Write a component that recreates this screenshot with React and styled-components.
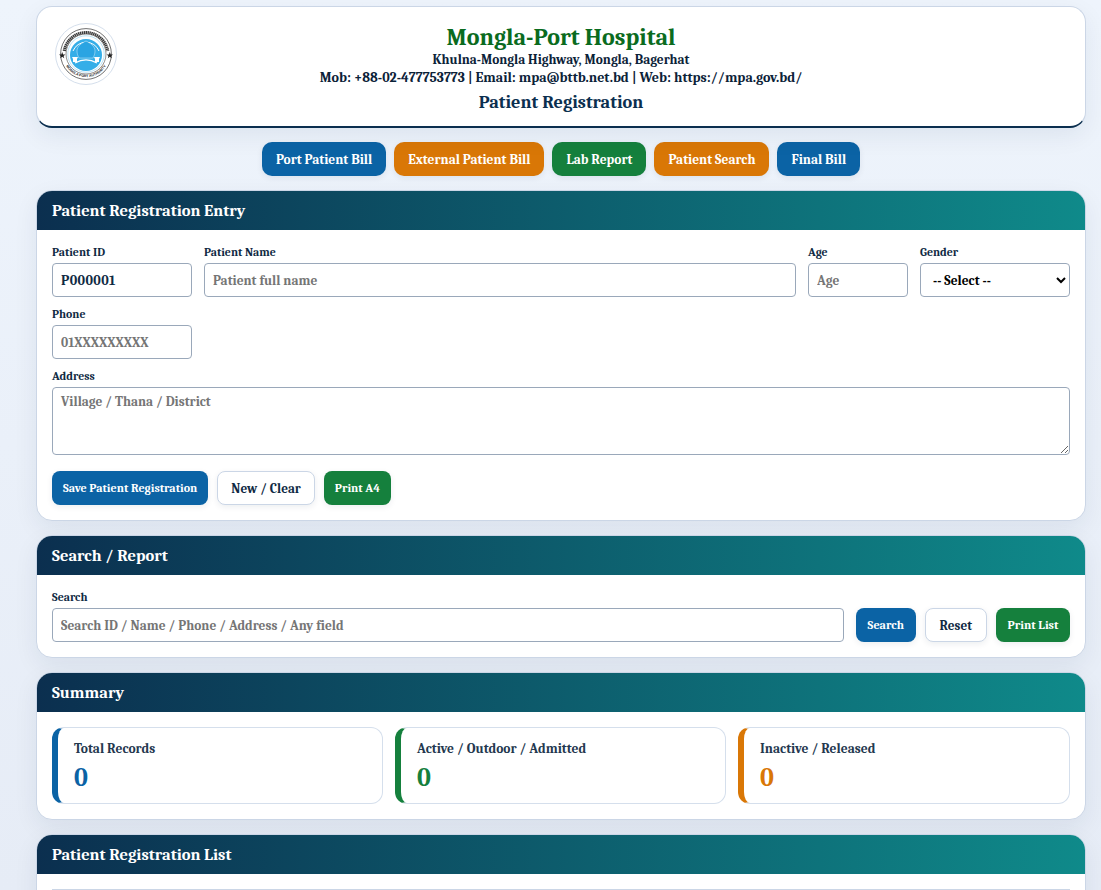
import React from 'react';
import styled, { createGlobalStyle } from 'styled-components';

const serif = `Cambria, Caladea, "DejaVu Serif Condensed", "Liberation Serif", serif`;

const Logo = () => (
  <svg width="60" height="60" viewBox="0 0 60 60">
    <defs>
      <path id="logoLowerArc" d="M6.800 30a23.200 23.200 0 0 0 46.400 0" />
    </defs>
    <circle cx="30" cy="30" r="25.400" fill="#fff" stroke="#333" strokeWidth="0.7" />
    <path d="M8.300 27a22 22 0 0 1 43.400 0" fill="none" stroke="#3a3a3a" strokeWidth="3.200" strokeDasharray="1.400 0.500" />
    <text fontSize="3.500" fontWeight="700" fill="#222" fontFamily="Liberation Sans, sans-serif">
      <textPath href="#logoLowerArc" startOffset="50%" textAnchor="middle">
        MONGLA PORT AUTHORITY
      </textPath>
    </text>
    <circle cx="30" cy="30" r="20" fill="#fff" stroke="#444" strokeWidth="0.6" />
    <circle cx="30" cy="30" r="18.200" fill="#fff" stroke="#8fd0ee" strokeWidth="0.6" />
    <circle cx="30" cy="31" r="16" fill="#35aee8" />
    <path d="M17 27a14 14 0 0 1 26 0" fill="none" stroke="#fff" strokeWidth="1" />
    <path d="M21 27c0-5 5-8 9-10 4 2 9 5 9 10 0 3-1 5-2 7H23c-1-2-2-4-2-7z" fill="#2aa4e2" stroke="#fff" strokeWidth="0.4" />
    <path d="M19 39c7-4 15-4 22 0" fill="none" stroke="#fff" strokeWidth="1.400" />
    <path d="M16 33h6l-1 2v3h-4v-3zM38 33h6l-1 2v3h-4v-3z" fill="#fff" />
    <path d="M6.200 28l.9 2.400 2.300.1-1.800 1.400.7 2.300-2.100-1.400-2 1.400.6-2.300-1.800-1.400 2.300-.1zM53.800 28l.9 2.400 2.300.1-1.800 1.400.7 2.300-2.100-1.400-2 1.400.6-2.300-1.800-1.400 2.300-.1z" fill="#222" />
  </svg>
);

const App = () => (
  <>
    <GlobalStyle />
    <Page>
      <Letterhead>
        <LogoFrame>
          <Logo />
        </LogoFrame>
        <HospitalName>Mongla-Port Hospital</HospitalName>
        <HospitalLine>Khulna-Mongla Highway, Mongla, Bagerhat</HospitalLine>
        <ContactLine>Mob: +88-02-477753773 | Email: mpa@bttb.net.bd | Web: https://mpa.gov.bd/</ContactLine>
        <PageTitle>Patient Registration</PageTitle>
      </Letterhead>

      <Nav>
        <NavLink $tone="blue">Port Patient Bill</NavLink>
        <NavLink $tone="orange">External Patient Bill</NavLink>
        <NavLink $tone="green">Lab Report</NavLink>
        <NavLink $tone="orange">Patient Search</NavLink>
        <NavLink $tone="blue">Final Bill</NavLink>
      </Nav>

      <Card>
        <CardHead>Patient Registration Entry</CardHead>
        <CardBody>
          <EntryRow>
            <Field>
              <Label>Patient ID</Label>
              <IdInput defaultValue="P000001" />
            </Field>
            <Field>
              <Label>Patient Name</Label>
              <Input placeholder="Patient full name" />
            </Field>
            <Field>
              <Label>Age</Label>
              <Input placeholder="Age" />
            </Field>
            <Field>
              <Label>Gender</Label>
              <Select defaultValue="">
                <option value="">-- Select --</option>
                <option>Male</option>
                <option>Female</option>
              </Select>
            </Field>
          </EntryRow>
          <PhoneRow>
            <Field>
              <Label>Phone</Label>
              <Input placeholder="01XXXXXXXXX" />
            </Field>
          </PhoneRow>
          <Field>
            <Label>Address</Label>
            <TextArea placeholder="Village / Thana / District" />
          </Field>
          <Actions>
            <Button $tone="blue">Save Patient Registration</Button>
            <Button $tone="plain">New / Clear</Button>
            <Button $tone="green">Print A4</Button>
          </Actions>
        </CardBody>
      </Card>

      <Card>
        <CardHead>Search / Report</CardHead>
        <CardBody>
          <SearchRow>
            <Field>
              <Label>Search</Label>
              <Input placeholder="Search ID / Name / Phone / Address / Any field" />
            </Field>
            <SearchButtons>
              <SearchButton $tone="blue">Search</SearchButton>
              <SearchButton $tone="plain">Reset</SearchButton>
              <SearchButton $tone="green">Print List</SearchButton>
            </SearchButtons>
          </SearchRow>
        </CardBody>
      </Card>

      <Card>
        <CardHead>Summary</CardHead>
        <CardBody>
          <StatGrid>
            <Stat $tone="blue">
              <StatLabel>Total Records</StatLabel>
              <StatValue $tone="blue">0</StatValue>
            </Stat>
            <Stat $tone="green">
              <StatLabel>Active / Outdoor / Admitted</StatLabel>
              <StatValue $tone="green">0</StatValue>
            </Stat>
            <Stat $tone="orange">
              <StatLabel>Inactive / Released</StatLabel>
              <StatValue $tone="orange">0</StatValue>
            </Stat>
          </StatGrid>
        </CardBody>
      </Card>

      <Card>
        <CardHead>Patient Registration List</CardHead>
        <CardBody>
          <ListTable />
        </CardBody>
      </Card>
    </Page>
  </>
);

const tones = {
  blue: '#0b63a5',
  orange: '#d97706',
  green: '#15803d',
};

const GlobalStyle = createGlobalStyle`
  html, body {
    margin: 0;
    height: 890px;
    overflow: hidden;
  }
  body {
    background: linear-gradient(180deg, #eef4fc 0%, #e6ecf6 100%);
    font-family: ${serif};
    color: #0f2a43;
  }
  * {
    box-sizing: border-box;
  }
`;

const Page = styled.main`
  padding: 6px 15px 0 36px;
`;

const Letterhead = styled.header`
  position: relative;
  height: 122px;
  padding-top: 16px;
  background: #fff;
  border: 1px solid #cbd6e6;
  border-bottom: 2px solid #0b2f4f;
  border-radius: 16px;
  box-shadow: 0 8px 24px rgba(15, 42, 67, 0.07);
  text-align: center;
`;

const LogoFrame = styled.div`
  position: absolute;
  left: 18px;
  top: 16px;
  width: 62px;
  height: 62px;
  border: 1px solid #d5dfec;
  border-radius: 50%;
  display: flex;
  align-items: center;
  justify-content: center;
`;

const HospitalName = styled.h1`
  margin: 0;
  font-size: 24px;
  line-height: 28px;
  color: #0a6b1e;
`;

const HospitalLine = styled.div`
  font-size: 13.33px;
  line-height: 18px;
  font-weight: 700;
  color: #0b2238;
`;

const ContactLine = styled(HospitalLine)`
  font-size: 14px;
`;

const PageTitle = styled.h2`
  margin: 5px 0 0;
  font-size: 18.3px;
  line-height: 22px;
  color: #0b2f4f;
`;

const Nav = styled.nav`
  display: flex;
  justify-content: center;
  gap: 8px;
  margin: 14px 0;
`;

const NavLink = styled.a`
  height: 34px;
  padding: 0 14px;
  display: flex;
  align-items: center;
  border-radius: 10px;
  background: ${(p) => tones[p.$tone]};
  box-shadow: 0 2px 6px rgba(15, 42, 67, 0.08);
  color: #fff;
  font-size: 13.45px;
  font-weight: 700;
`;

const Card = styled.section`
  margin-bottom: 14px;
  background: #fff;
  border: 1px solid #cbd6e6;
  border-radius: 16px;
  box-shadow: 0 8px 24px rgba(15, 42, 67, 0.07);
  overflow: hidden;
`;

const CardHead = styled.h3`
  margin: 0;
  height: 39px;
  padding: 0 15px;
  display: flex;
  align-items: center;
  background: linear-gradient(90deg, #0b2f4f, #0f8a8a);
  color: #fff;
  font-size: 16.5px;
`;

const CardBody = styled.div`
  padding: 15px;
`;

const EntryRow = styled.div`
  display: grid;
  grid-template-columns: 140px 1fr 100px 150px;
  gap: 12px;
`;

const PhoneRow = styled.div`
  display: grid;
  grid-template-columns: 140px;
  margin: 10px 0;
`;

const Field = styled.div`
  display: flex;
  flex-direction: column;
  min-width: 0;
`;

const Label = styled.label`
  font-size: 11.8px;
  line-height: 14px;
  font-weight: 700;
  color: #0f2a43;
  margin-bottom: 4px;
`;

const controlStyles = `
  width: 100%;
  height: 34px;
  padding: 0 8px;
  border: 1px solid #9aa8ba;
  border-radius: 4px;
  background: #fff;
  font-family: ${serif};
  font-size: 13.4px;
  font-weight: 700;
  color: #000;
  outline: none;
  &::placeholder {
    color: #757575;
  }
`;

const Input = styled.input`
  ${controlStyles}
`;

const IdInput = styled.input`
  ${controlStyles}
  font-size: 14px;
  letter-spacing: 0.4px;
  color: #0f2a43;
`;

const Select = styled.select`
  ${controlStyles}
`;

const TextArea = styled.textarea`
  ${controlStyles}
  height: 68px;
  padding-top: 6px;
  display: block;
`;

const Actions = styled.div`
  display: flex;
  gap: 9px;
  margin-top: 16px;
`;

const Button = styled.button`
  height: 34px;
  padding: 0 ${(p) => (p.$tone === 'plain' ? '13px' : '11px')};
  border-radius: 8px;
  border: ${(p) => (p.$tone === 'plain' ? '1px solid #cbd6e6' : '0')};
  background: ${(p) => tones[p.$tone] || '#fff'};
  box-shadow: 0 2px 6px rgba(15, 42, 67, 0.08);
  color: ${(p) => (p.$tone === 'plain' ? '#0f2a43' : '#fff')};
  font-family: ${serif};
  font-size: ${(p) => (p.$tone === 'plain' ? '13.2px' : '12px')};
  font-weight: 700;
  white-space: nowrap;
`;

const SearchButton = styled(Button)`
  padding: 0 ${(p) => (p.$tone === 'plain' ? '14px' : '11.6px')};
  font-size: ${(p) => (p.$tone === 'plain' ? '13.2px' : '12.1px')};
`;

const SearchRow = styled.div`
  display: grid;
  grid-template-columns: 1fr auto;
  gap: 12px;
  align-items: end;
`;

const SearchButtons = styled.div`
  display: flex;
  gap: 9px;
`;

const StatGrid = styled.div`
  display: grid;
  grid-template-columns: 331px 331px 1fr;
  gap: 12px;
`;

const Stat = styled.div`
  height: 77px;
  padding: 12px 16px;
  border: 1px solid #d5dfec;
  border-left: 6px solid ${(p) => tones[p.$tone]};
  border-radius: 12px;
`;

const StatLabel = styled.div`
  font-size: 13.5px;
  line-height: 18px;
  font-weight: 700;
  color: #24384f;
`;

const StatValue = styled.div`
  margin-top: 5px;
  font-size: 26px;
  line-height: 30px;
  font-weight: 700;
  color: ${(p) => tones[p.$tone]};
`;

const ListTable = styled.div`
  height: 200px;
  border-top: 1px solid #cbd6e6;
`;

export default App;
